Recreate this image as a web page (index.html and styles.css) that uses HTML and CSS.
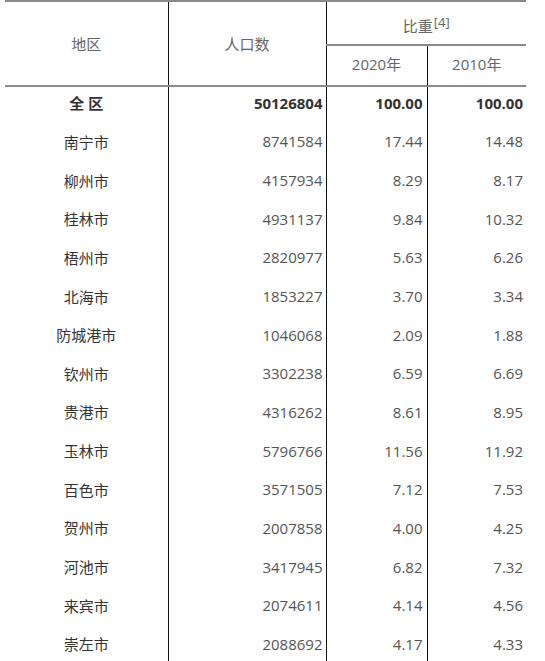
FILE: index.html
```html
<!DOCTYPE html>
<html lang="zh">
<head>
<meta charset="utf-8">
<link rel="stylesheet" href="styles.css">
</head>
<body>
<table class="pop">
  <colgroup>
    <col class="c1"><col class="c2"><col class="c3"><col class="c4">
  </colgroup>
  <thead>
    <tr class="h1">
      <th rowspan="2" class="hname">地区</th>
      <th rowspan="2" class="hname">人口数</th>
      <th colspan="2" class="hshare">比重<sup>[4]</sup></th>
    </tr>
    <tr class="h2">
      <th class="hyear">2020年</th>
      <th class="hyear">2010年</th>
    </tr>
  </thead>
  <tbody>
    <tr class="total"><td class="name">全 区</td><td class="num">50126804</td><td class="num">100.00</td><td class="num">100.00</td></tr>
    <tr><td class="name">南宁市</td><td class="num">8741584</td><td class="num">17.44</td><td class="num">14.48</td></tr>
    <tr><td class="name">柳州市</td><td class="num">4157934</td><td class="num">8.29</td><td class="num">8.17</td></tr>
    <tr><td class="name">桂林市</td><td class="num">4931137</td><td class="num">9.84</td><td class="num">10.32</td></tr>
    <tr><td class="name">梧州市</td><td class="num">2820977</td><td class="num">5.63</td><td class="num">6.26</td></tr>
    <tr><td class="name">北海市</td><td class="num">1853227</td><td class="num">3.70</td><td class="num">3.34</td></tr>
    <tr><td class="name">防城港市</td><td class="num">1046068</td><td class="num">2.09</td><td class="num">1.88</td></tr>
    <tr><td class="name">钦州市</td><td class="num">3302238</td><td class="num">6.59</td><td class="num">6.69</td></tr>
    <tr><td class="name">贵港市</td><td class="num">4316262</td><td class="num">8.61</td><td class="num">8.95</td></tr>
    <tr><td class="name">玉林市</td><td class="num">5796766</td><td class="num">11.56</td><td class="num">11.92</td></tr>
    <tr><td class="name">百色市</td><td class="num">3571505</td><td class="num">7.12</td><td class="num">7.53</td></tr>
    <tr><td class="name">贺州市</td><td class="num">2007858</td><td class="num">4.00</td><td class="num">4.25</td></tr>
    <tr><td class="name">河池市</td><td class="num">3417945</td><td class="num">6.82</td><td class="num">7.32</td></tr>
    <tr><td class="name">来宾市</td><td class="num">2074611</td><td class="num">4.14</td><td class="num">4.56</td></tr>
    <tr><td class="name">崇左市</td><td class="num">2088692</td><td class="num">4.17</td><td class="num">4.33</td></tr>
  </tbody>
</table>
</body>
</html>
```
FILE: styles.css
```css
html, body {
  margin: 0;
  padding: 0;
  background: #fff;
}
body {
  font-family: "Open Sans", "Noto Sans CJK SC", sans-serif;
  font-size: 15px;
  color: #555;
}
.pop {
  margin-left: 5px;
  width: 521px;
  table-layout: fixed;
  border-collapse: collapse;
  border-top: 2px solid #8a8a8a;
}
.c1 { width: 163px; }
.c2 { width: 158px; }
.c3 { width: 101px; }
.c4 { width: 99px; }
.pop th, .pop td {
  padding: 0;
  border-left: 1px solid #111;
  border-right: 1px solid #111;
}
.pop tr > :first-child { border-left: none; }
.pop tr > :last-child { border-right: none; }
.pop th {
  font-weight: normal;
  color: #666;
  text-align: center;
}
.hshare {
  height: 38px;
  border-bottom: 2px solid #8a8a8a;
  vertical-align: middle;
  padding-top: 4px !important;
}
.hshare sup {
  font-size: 13px;
  vertical-align: 0;
  position: relative;
  top: -5px;
  margin-left: 1px;
}
.hyear {
  height: 34px;
  padding-bottom: 5px !important;
}
.pop thead tr.h2 th, .hname {
  border-bottom: 2px solid #8a8a8a;
}
.pop td {
  height: 31.65px;
  padding-bottom: 7px;
  vertical-align: middle;
}
.name {
  text-align: center;
  color: #333;
}
.num {
  text-align: right;
  padding-right: 3px !important;
}
.pop td.num:nth-child(3) { padding-right: 4px !important; }
.total td {
  font-weight: bold;
  color: #333;
}
```
